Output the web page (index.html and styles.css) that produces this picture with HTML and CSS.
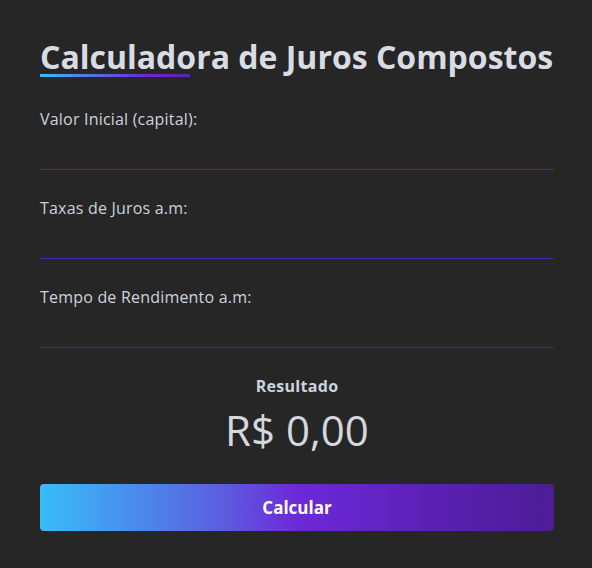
FILE: index.html
```html
<!DOCTYPE html>
<html lang="pt-BR">
<head>
<meta charset="utf-8">
<title>Calculadora de Juros Compostos</title>
<link rel="stylesheet" href="styles.css">
</head>
<body>
<main class="card">
  <h1 class="title">Calculadora de Juros Compostos</h1>
  <form class="form">
    <div class="field">
      <label class="label" for="capital">Valor Inicial (capital):</label>
      <input class="input" id="capital" type="text">
    </div>
    <div class="field">
      <label class="label" for="taxa">Taxas de Juros a.m:</label>
      <input class="input" id="taxa" type="text">
    </div>
    <div class="field">
      <label class="label" for="tempo">Tempo de Rendimento a.m:</label>
      <input class="input" id="tempo" type="text">
    </div>
    <div class="result">
      <span class="result-label">Resultado</span>
      <span class="result-value">R$ 0,00</span>
    </div>
    <button class="button" type="button">Calcular</button>
  </form>
</main>
</body>
</html>
```

FILE: styles.css
```css
* { box-sizing: border-box; }
html, body { margin: 0; height: 100%; }
body {
  background: #262626;
  font-family: "Open Sans", "DejaVu Sans", sans-serif;
  color: #d4d7dd;
}
.card {
  min-height: 568px;
  background: #262626;
  padding: 36px 38px 0 40px;
}
.title {
  margin: 0 0 3px;
  height: 42px;
  font-size: 32px;
  font-weight: 700;
  line-height: 42px;
  color: #d9dce2;
  position: relative;
}
.title::after {
  content: "";
  position: absolute;
  left: 0;
  top: 38px;
  width: 150px;
  height: 3px;
  background: linear-gradient(90deg, #38bdf8, #6d28d9 70%, #5b21b6);
}
.form {
  display: flex;
  flex-direction: column;
}
.field {
  display: flex;
  flex-direction: column;
  height: 89px;
  padding-top: 28px;
  border-bottom: 1px solid #5120a8;
}
.label {
  height: 20px;
  font-size: 16px;
  line-height: 20px;
  letter-spacing: 0.2px;
  color: #cdd3dc;
}
.input {
  margin-top: auto;
  background: transparent;
  border: 0;
  padding: 0;
  height: 36px;
  outline: none;
  color: #d4d7dd;
  font: inherit;
}
.result {
  display: flex;
  flex-direction: column;
  align-items: center;
  padding-top: 28px;
}
.result-label {
  font-size: 16px;
  font-weight: 700;
  line-height: 20px;
  letter-spacing: 0.3px;
  color: #cdd3dc;
}
.result-value {
  font-size: 42px;
  line-height: 68px;
  color: #d4d7dd;
}
.button {
  margin-top: 20px;
  height: 47px;
  border: 0;
  border-radius: 4px;
  background: linear-gradient(90deg, #38bdf8 0%, #5b5fe0 35%, #6d28d9 50%, #5b21b6 75%, #4c1d95 100%);
  color: #ffffff;
  font-family: inherit;
  font-size: 17px;
  font-weight: 700;
  cursor: pointer;
}
```
